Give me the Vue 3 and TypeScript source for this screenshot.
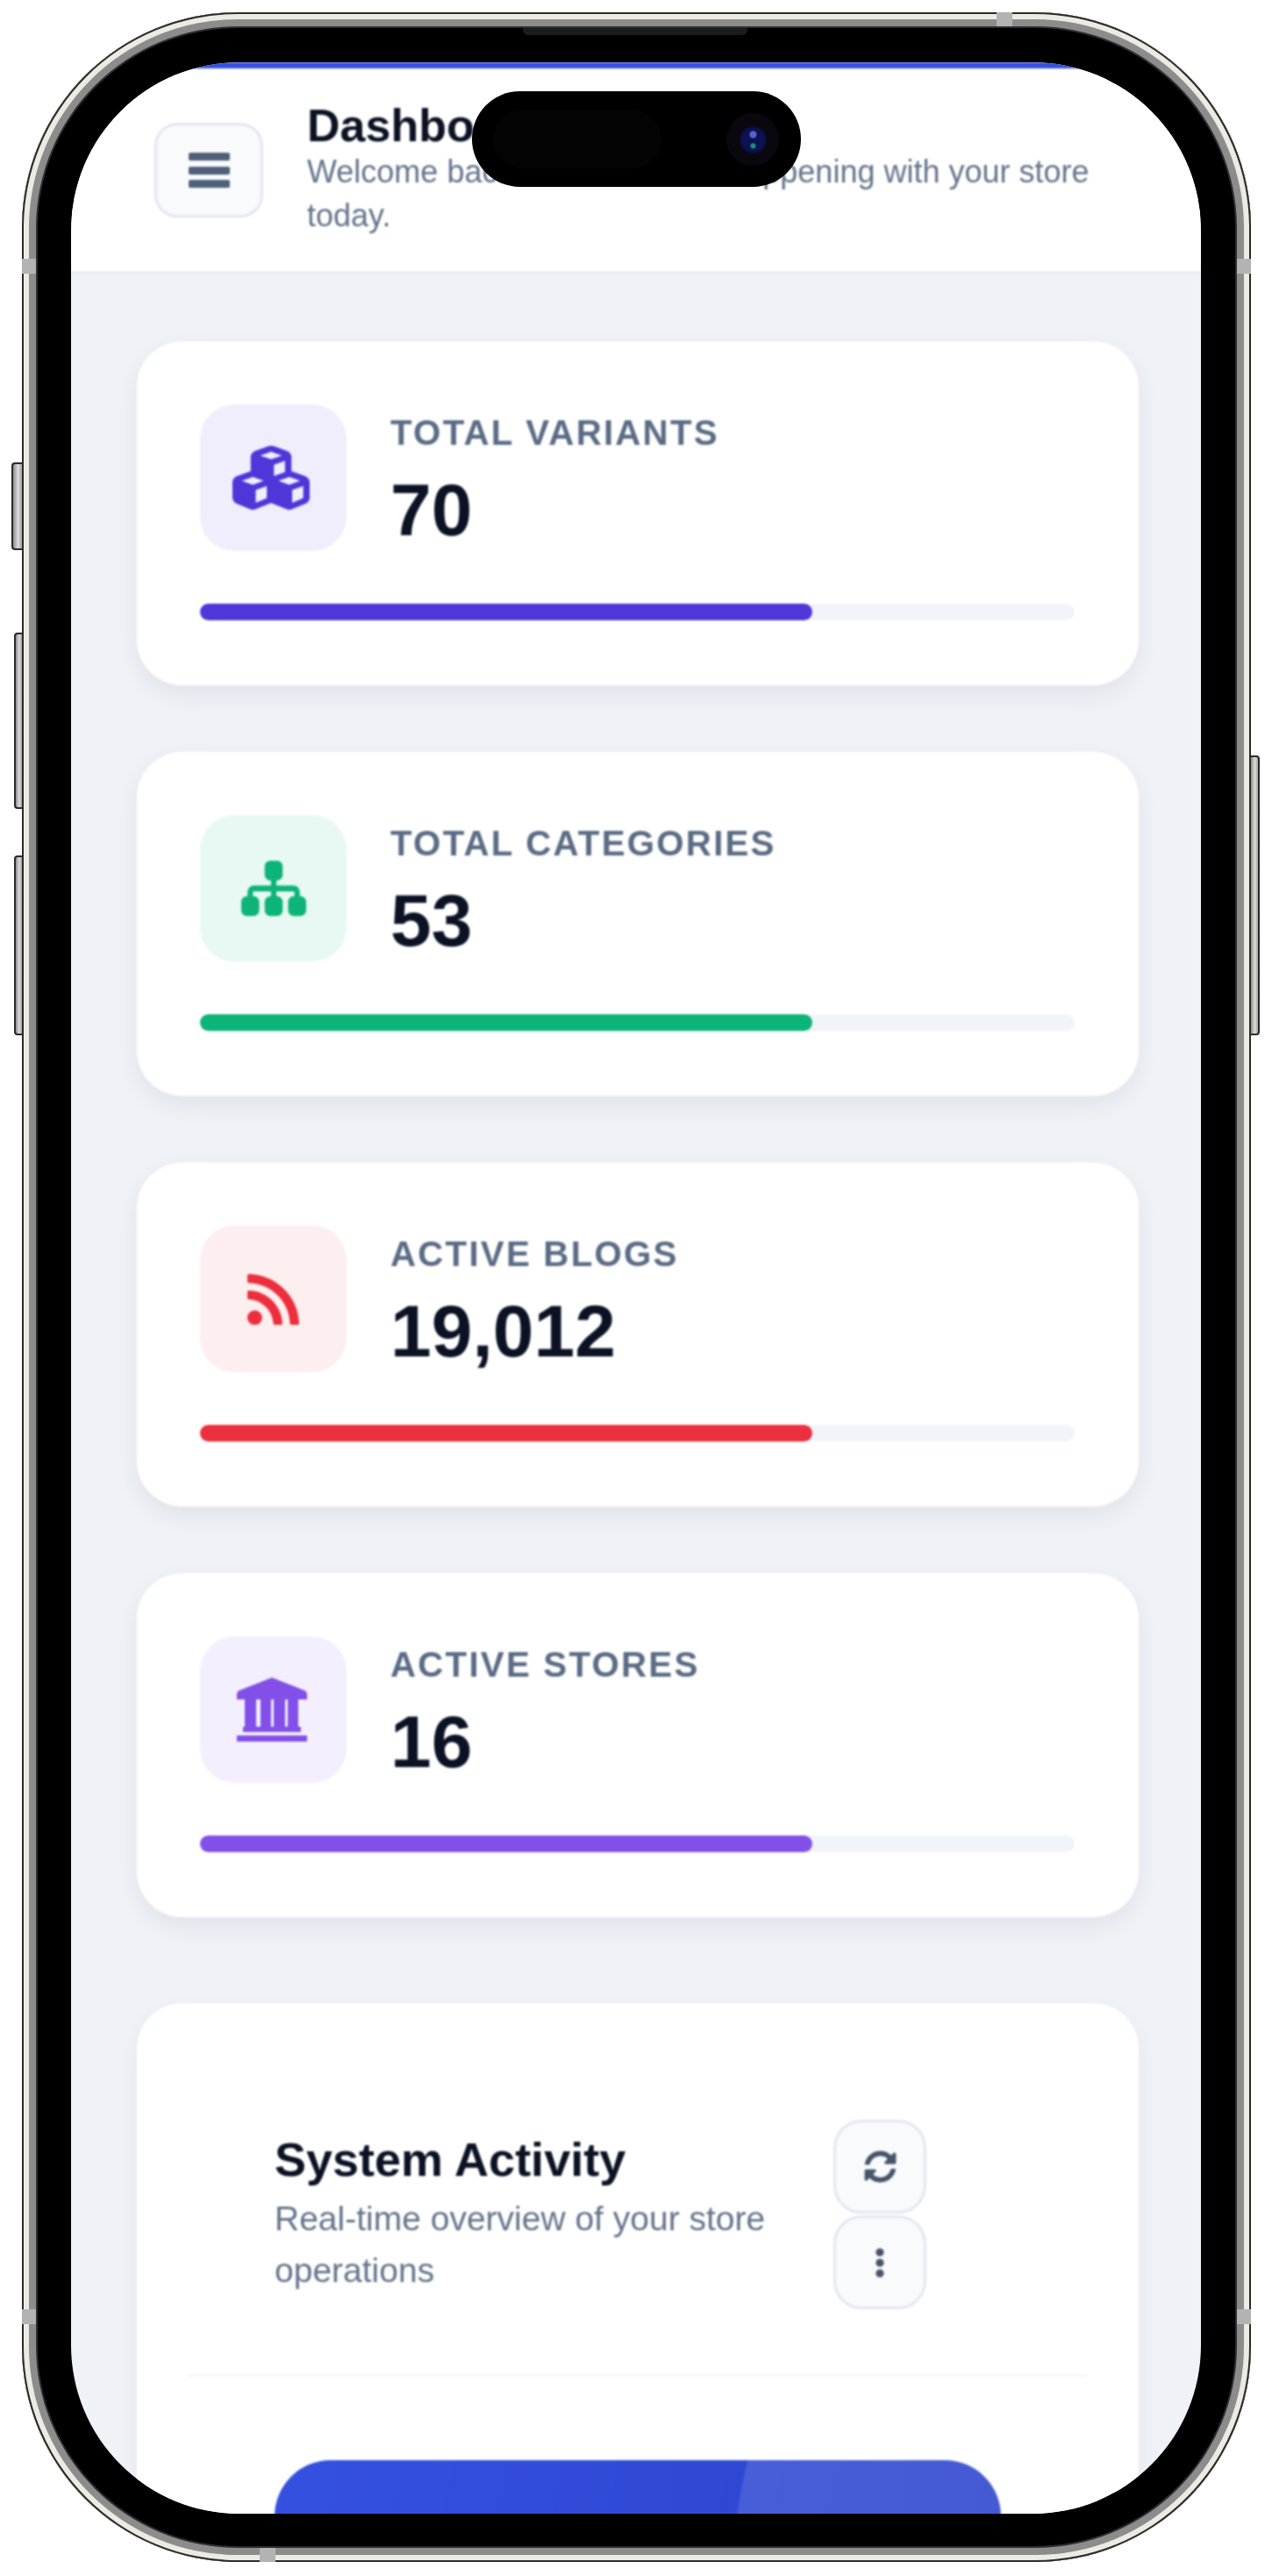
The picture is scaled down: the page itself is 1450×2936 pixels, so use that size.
<script setup lang="ts">
interface Stat {
  label: string
  value: string
  tone: string
  viewBox: string
  width: number
  height: number
  path: string
}

const stats: Stat[] = [
  {
    label: 'TOTAL VARIANTS',
    value: '70',
    tone: 'indigo',
    viewBox: '0 0 576 512',
    width: 88,
    height: 73,
    path: 'M290.8 48.6l78.4 29.7L288 109.5 206.8 78.3l78.4-29.7c1.8-.7 3.8-.7 5.7 0zM136 92.5V204.7c-1.3 .4-2.6 .8-3.9 1.3l-96 36.4C14.4 250.6 0 271.5 0 294.7V413.9c0 22.2 13.1 42.3 33.5 51.3l96 42.2c14.4 6.3 30.7 6.3 45.1 0L288 457.5l113.5 49.9c14.4 6.3 30.7 6.3 45.1 0l96-42.2c20.3-8.9 33.5-29.1 33.5-51.3V294.7c0-23.3-14.4-44.1-36.1-52.4l-96-36.4c-1.3-.5-2.6-.9-3.9-1.3V92.5c0-23.3-14.4-44.1-36.1-52.4l-96-36.4c-12.8-4.8-26.9-4.8-39.7 0l-96 36.4C150.4 48.4 136 69.3 136 92.5zM392 210.6l-82.4 31.2V152.6L392 121v89.6zM154.8 250.9l78.4 29.7L152 311.7 70.8 280.6l78.4-29.7c1.8-.7 3.8-.7 5.7 0zm18.8 204.4V354.8L256 323.2v95.9l-82.4 36.2zM421.2 250.9c1.8-.7 3.8-.7 5.7 0l78.4 29.7L424 311.7l-81.2-31.1 78.4-29.7zM523.2 421.2l-77.6 34.1V354.8L528 323.2v90.7c0 3.2-1.9 6-4.8 7.3z'
  },
  {
    label: 'TOTAL CATEGORIES',
    value: '53',
    tone: 'green',
    viewBox: '0 32 576 448',
    width: 74,
    height: 63,
    path: 'M208 80c0-26.5 21.5-48 48-48h64c26.5 0 48 21.5 48 48v64c0 26.5-21.5 48-48 48h-8v40H464c30.9 0 56 25.1 56 56v32h8c26.5 0 48 21.5 48 48v64c0 26.5-21.5 48-48 48H464c-26.5 0-48-21.5-48-48V368c0-26.5 21.5-48 48-48h8V288c0-4.4-3.6-8-8-8H312v40h8c26.5 0 48 21.5 48 48v64c0 26.5-21.5 48-48 48H256c-26.5 0-48-21.5-48-48V368c0-26.5 21.5-48 48-48h8V280H112c-4.4 0-8 3.6-8 8v32h8c26.5 0 48 21.5 48 48v64c0 26.5-21.5 48-48 48H48c-26.5 0-48-21.5-48-48V368c0-26.5 21.5-48 48-48h8V288c0-30.9 25.1-56 56-56H264V192h-8c-26.5 0-48-21.5-48-48V80z'
  },
  {
    label: 'ACTIVE BLOGS',
    value: '19,012',
    tone: 'red',
    viewBox: '0 32 448 448',
    width: 59,
    height: 58,
    path: 'M128.081 415.959c0 35.369-28.672 64.041-64.041 64.041S0 451.328 0 415.959s28.672-64.041 64.041-64.041 64.04 28.673 64.04 64.041zm175.66 47.25c-8.354-154.6-132.185-278.587-286.95-286.95C7.656 175.765 0 183.105 0 192.253v48.069c0 8.415 6.49 15.472 14.887 16.018 111.832 7.284 201.473 96.702 208.772 208.772.547 8.397 7.604 14.887 16.018 14.887h48.069c9.149.001 16.489-7.655 15.995-16.79zm144.249.288C439.596 229.677 251.465 40.445 16.503 32.01 7.473 31.686 0 38.981 0 48.016v48.068c0 8.625 6.835 15.645 15.453 15.999 191.179 7.839 344.627 161.316 352.465 352.465.353 8.618 7.373 15.453 15.999 15.453h48.068c9.034-.001 16.329-7.474 16.005-16.504z'
  },
  {
    label: 'ACTIVE STORES',
    value: '16',
    tone: 'purple',
    viewBox: '0 0 80 73',
    width: 80,
    height: 73,
    path: 'M40 0L78 15 80 18V25H0V18L2 15ZM9 25H22V57H9ZM27 25H39V57H27ZM42 25H55V57H42ZM58 25H70V57H58ZM7 56H73V62H7ZM0 66H80V73H0Z'
  }
]

const syncPath =
  'M370.72 133.28C339.458 104.008 298.888 87.962 255.848 88c-77.458.068-144.328 53.178-162.791 126.85-1.344 5.363-6.122 9.15-11.651 9.15H24.103c-7.498 0-13.194-6.807-11.807-14.176C33.933 94.924 134.813 8 256 8c66.448 0 126.791 26.136 171.315 68.685L463.03 40.97C478.149 25.851 504 36.559 504 57.941V192c0 13.255-10.745 24-24 24H345.941c-21.382 0-32.09-25.851-16.971-40.971l41.75-41.749zM32 296h134.059c21.382 0 32.09 25.851 16.971 40.971l-41.75 41.75c31.262 29.273 71.835 45.319 114.876 45.28 77.418-.07 144.315-53.144 162.787-126.849 1.344-5.363 6.122-9.15 11.651-9.15h57.304c7.498 0 13.194 6.807 11.807 14.176C478.067 417.076 377.187 504 256 504c-66.448 0-126.791-26.136-171.315-68.685L48.97 471.03C33.851 486.149 8 475.441 8 454.059V320c0-13.255 10.745-24 24-24z'
</script>

<template>
  <div class="stage">
    <div class="key key--action"></div>
    <div class="key key--up"></div>
    <div class="key key--down"></div>
    <div class="key key--power"></div>

    <div class="phone">
      <span class="band band--top"></span>
      <span class="band band--bottom"></span>
      <span class="band band--left-a"></span>
      <span class="band band--right-a"></span>
      <span class="band band--left-b"></span>
      <span class="band band--right-b"></span>
      <span class="speaker"></span>

      <div class="screen">
        <div class="content">
          <header class="topbar">
            <button class="menu-btn" type="button" aria-label="Menu">
              <svg width="47" height="40" viewBox="0 0 47 40" fill="#4f6079">
                <rect width="47" height="9" rx="2" />
                <rect y="16" width="47" height="9" rx="2" />
                <rect y="31" width="47" height="9" rx="2" />
              </svg>
            </button>
            <div class="topbar__text">
              <h1>Dashboard</h1>
              <p>Welcome back! Here's what's happening with your store today.</p>
            </div>
          </header>

          <main class="main">
            <section v-for="stat in stats" :key="stat.label" :class="['stat', `stat--${stat.tone}`]">
              <div class="stat__row">
                <div class="stat__icon">
                  <svg
                    :width="stat.width"
                    :height="stat.height"
                    :viewBox="stat.viewBox"
                    preserveAspectRatio="none"
                    fill="currentColor"
                  >
                    <path :d="stat.path" />
                  </svg>
                </div>
                <div class="stat__text">
                  <div class="stat__label">{{ stat.label }}</div>
                  <div class="stat__value">{{ stat.value }}</div>
                </div>
              </div>
              <div class="bar">
                <div class="bar__fill" :style="{ width: '70%' }"></div>
              </div>
            </section>

            <section class="activity">
              <div class="activity__head">
                <div class="activity__text">
                  <h2>System Activity</h2>
                  <p>Real-time overview of your store operations</p>
                </div>
                <div class="activity__actions">
                  <button class="icon-btn" type="button" aria-label="Refresh">
                    <svg width="37" height="37" viewBox="0 0 512 512" fill="#475569">
                      <path :d="syncPath" />
                    </svg>
                  </button>
                  <button class="icon-btn" type="button" aria-label="More">
                    <svg width="10" height="34" viewBox="0 0 10 34" fill="#475569">
                      <circle cx="5" cy="5" r="4.6" />
                      <circle cx="5" cy="17" r="4.6" />
                      <circle cx="5" cy="29" r="4.6" />
                    </svg>
                  </button>
                </div>
              </div>
              <div class="banner"><span class="banner__glow"></span></div>
            </section>
          </main>
        </div>
      </div>

      <div class="island">
        <span class="island__sensor"></span>
        <span class="island__camera"><span class="island__lens"></span></span>
      </div>
    </div>
  </div>
</template>

<style>
html,
body {
  background: #fff;
}
</style>

<style scoped>
.stage {
  position: relative;
  box-sizing: border-box;
  width: 1450px;
  height: 2936px;
  padding: 14px 0 0 25px;
  overflow: hidden;
  font-family: "Liberation Sans", Arial, sans-serif;
}

/* device shell */
.phone {
  position: relative;
  box-sizing: border-box;
  width: 1401px;
  height: 2906px;
  padding: 57px 57px 55px 56px;
  border-radius: 246px;
  background: #000;
  box-shadow:
    inset 0 0 0 2px #2b2b2b,
    inset 0 0 0 8px #ecebe2,
    inset 0 0 0 16px #8c8c8c,
    inset 0 0 0 18px #2e2e2e;
}

.key {
  position: absolute;
  box-sizing: border-box;
  border: 2px solid #2b2b2b;
  background: linear-gradient(to right, #8d8d8d, #dcdcdc 55%, #a5a5a5);
}

.key--action,
.key--up,
.key--down {
  border-right: 0;
  border-radius: 4px 0 0 4px;
}

.key--action {
  left: 13px;
  top: 527px;
  width: 12px;
  height: 100px;
}

.key--up {
  left: 16px;
  top: 721px;
  width: 9px;
  height: 201px;
}

.key--down {
  left: 16px;
  top: 975px;
  width: 9px;
  height: 205px;
}

.key--power {
  left: 1426px;
  top: 861px;
  width: 10px;
  height: 319px;
  border-left: 0;
  border-radius: 0 4px 4px 0;
}

.band {
  position: absolute;
  background: #b3b3b3;
}

.band--top {
  left: 1111px;
  top: 0;
  width: 18px;
  height: 16px;
}

.band--bottom {
  left: 271px;
  bottom: 0;
  width: 18px;
  height: 16px;
}

.band--left-a,
.band--right-a {
  top: 281px;
  width: 16px;
  height: 17px;
}

.band--left-b,
.band--right-b {
  top: 2618px;
  width: 16px;
  height: 17px;
}

.band--left-a,
.band--left-b {
  left: 0;
}

.band--right-a,
.band--right-b {
  right: 0;
}

.speaker {
  position: absolute;
  left: 571px;
  top: 18px;
  width: 256px;
  height: 8px;
  border-radius: 0 0 6px 6px;
  background: #1c1c1c;
}

.island {
  position: absolute;
  left: 513px;
  top: 90px;
  width: 375px;
  height: 109px;
  border-radius: 55px;
  background: #000;
}

.island__sensor {
  position: absolute;
  left: 24px;
  top: 21px;
  width: 192px;
  height: 67px;
  border-radius: 34px;
  background: #040404;
}

.island__camera {
  position: absolute;
  left: 290px;
  top: 25px;
  display: flex;
  align-items: center;
  justify-content: center;
  width: 60px;
  height: 60px;
  border-radius: 50%;
  background: #0a070f;
}

.island__lens {
  width: 31px;
  height: 31px;
  border-radius: 50%;
  background:
    radial-gradient(circle at 50% 30%, #5a5ed8 0 3px, transparent 5px),
    radial-gradient(circle at 50% 72%, #1f8f7a 0 2px, transparent 4px),
    radial-gradient(circle, #0c1350 0 55%, #070a2c 75%, #0a070f);
}

/* screen */
.screen {
  width: 1288px;
  height: 2794px;
  border-radius: 192px;
  overflow: hidden;
  background: #eff2f7;
}

.content {
  filter: blur(1.3px);
}

.topbar {
  box-sizing: border-box;
  display: flex;
  align-items: center;
  gap: 50px;
  height: 241px;
  padding: 0 95px;
  border-top: 7px solid #3550e0;
  border-bottom: 3px solid #e6ebf2;
  background: #fff;
}

.menu-btn {
  display: flex;
  flex: none;
  align-items: center;
  justify-content: center;
  box-sizing: border-box;
  width: 124px;
  height: 108px;
  padding: 0;
  border: 3px solid #e2e8f0;
  border-radius: 26px;
  background: #f8fafc;
}

.topbar__text h1 {
  margin: 0;
  font-size: 52px;
  font-weight: 700;
  line-height: 55px;
  color: #0b1224;
}

.topbar__text p {
  margin: 0;
  font-size: 36px;
  line-height: 50px;
  color: #64748b;
}

.main {
  display: flex;
  flex-direction: column;
  gap: 76px;
  padding: 77px 71px 0 75px;
}

.stat {
  box-sizing: border-box;
  height: 392px;
  padding: 72px 73px 0 72px;
  border-radius: 52px;
  background: #fff;
  box-shadow: 0 10px 30px rgba(15, 23, 42, 0.07);
}

.stat--indigo {
  --tone: #4f36d9;
  --tint: #f0eefc;
}

.stat--green {
  --tone: #0cb478;
  --tint: #e8f8f3;
}

.stat--red {
  --tone: #ec2f3e;
  --tint: #fdeeef;
}

.stat--purple {
  --tone: #8250e8;
  --tint: #f3effe;
}

.stat--indigo svg {
  margin-right: 5px;
}

.stat--purple svg {
  margin-right: 3px;
}

.stat__row {
  display: flex;
  gap: 50px;
}

.stat__icon {
  display: flex;
  flex: none;
  align-items: center;
  justify-content: center;
  width: 167px;
  height: 167px;
  border-radius: 39px;
  background: var(--tint);
  color: var(--tone);
}

.stat__text {
  padding-top: 7px;
}

.stat__label {
  font-size: 40.3px;
  font-weight: 700;
  line-height: 52px;
  letter-spacing: 2.2px;
  color: #5a6b84;
}

.stat__value {
  margin-top: 15px;
  font-size: 84px;
  font-weight: 700;
  line-height: 92px;
  color: #0b1224;
}

.bar {
  height: 19px;
  margin-top: 60px;
  border-radius: 10px;
  background: #f1f5f9;
}

.bar__fill {
  height: 100%;
  border-radius: 10px;
  background: var(--tone);
}

.activity {
  margin-top: 22px;
  padding: 133px 60px 0 58px;
  border-radius: 52px;
  background: #fff;
  box-shadow: 0 10px 30px rgba(15, 23, 42, 0.05);
}

.activity__head {
  display: flex;
  align-items: center;
  gap: 40px;
  padding: 0 182px 74px 99px;
  border-bottom: 3px solid #f5f7fb;
}

.activity__text {
  flex: 1;
}

.activity__text h2 {
  margin: 0 0 8px;
  font-size: 54px;
  font-weight: 700;
  line-height: 59px;
  color: #0b1224;
}

.activity__text p {
  margin: 0;
  font-size: 39px;
  line-height: 59px;
  color: #64748b;
}

.activity__actions {
  display: flex;
  flex: none;
  flex-direction: column;
  gap: 2px;
}

.icon-btn {
  display: flex;
  align-items: center;
  justify-content: center;
  box-sizing: border-box;
  width: 106px;
  height: 107px;
  padding: 0;
  border: 3px solid #e2e8f0;
  border-radius: 32px;
  background: #f8fafc;
}

.banner {
  position: relative;
  height: 300px;
  margin: 95px 97px 0 99px;
  border-radius: 64px;
  overflow: hidden;
  background: linear-gradient(100deg, #3551e0, #2b43cc);
}

.banner__glow {
  position: absolute;
  left: 521px;
  top: -452px;
  width: 1200px;
  height: 1200px;
  border-radius: 50%;
  background: rgba(255, 255, 255, 0.12);
}
</style>
